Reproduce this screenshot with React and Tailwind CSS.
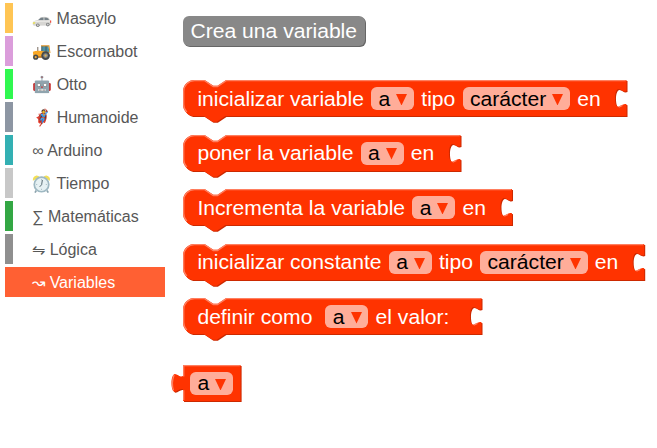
function CarIcon() {
  return (
    <svg viewBox="0 0 20 20" className="mr-[4.4px] mt-[6px] h-5 w-5">
      <path d="M0.8 12.8 1.4 10.6Q3.4 9.1 6 8.9L8.6 6.2Q13 5.1 16.4 6.6L18.2 9Q19.6 10.4 19 13.4L17.8 14.4 2 14.8Q0.4 14.4 0.8 12.8Z" fill="#d7d6d3" />
      <path d="M6.2 9.1 8.9 6.8 11.5 6.4V9.2ZM12.4 6.4Q15 6.4 16.2 7.4L17 9 12.5 9.2Z" fill="#758188" />
      <path d="M2 10.9Q8 9.7 18 10.1" fill="none" stroke="#f2f1ee" strokeWidth="1" />
      <path d="M0.8 11.6 3.3 11.2 3 12.5 0.9 12.8Z" fill="#ece13c" />
      <path d="M18 9.6h1.2v2.1H18Z" fill="#ef5044" />
      <circle cx="5.8" cy="14.2" r="1.8" fill="#77797a" />
      <circle cx="5.8" cy="14.2" r="1" fill="#d0d1d2" />
      <circle cx="15.8" cy="13.6" r="1.8" fill="#77797a" />
      <circle cx="15.8" cy="13.6" r="1" fill="#d0d1d2" />
    </svg>
  );
}

function TractorIcon() {
  return (
    <svg viewBox="0 0 20 20" className="mr-[4.4px] mt-[4px] h-5 w-5">
      <path d="M9.8 3h6.7l1 6.5H9.5Z" fill="#4d91a6" />
      <path d="M9 2.3h8.4v1.2H9Z" fill="#d98a1b" />
      <path d="M9.8 3.3V10M14 3.3V9" stroke="#40525a" strokeWidth="0.9" />
      <path d="M17 3.2 18 10" stroke="#e89b26" strokeWidth="1" />
      <path d="M5.8 4v5" stroke="#7b6d62" strokeWidth="1" />
      <path d="M0.9 8.8Q3 7.6 9.6 7.9L17 9V13.8H1.4Z" fill="#f9a825" />
      <path d="M2 13.2h11v1.6H2Z" fill="#b86e18" />
      <circle cx="3.7" cy="14.2" r="2.6" fill="#454a4d" />
      <circle cx="3.7" cy="14.2" r="1.1" fill="#e9a63c" />
      <circle cx="13.6" cy="12.6" r="4.3" fill="#454a4d" />
      <circle cx="13.6" cy="12.6" r="2.4" fill="#868b88" />
      <circle cx="13.6" cy="12.6" r="1.1" fill="#e3b052" />
    </svg>
  );
}

function ClockIcon() {
  return (
    <svg viewBox="0 0 18.7 18.7" className="mr-[4.4px] mt-[2px] h-5 w-5">
      <path d="M0.8 6.2Q0.5 2.2 4.1 1.4 6.3 1.3 7.1 3.1ZM16.8 6.2Q17.3 2.2 13.5 1.4 11.4 1.3 10.7 3.1Z" fill="#f2df58" />
      <path d="M4 15.5 2.8 17.4M14 15.5 15.2 17.4" stroke="#8ba3ad" strokeWidth="1.6" />
      <circle cx="8.9" cy="9.8" r="6.8" fill="#e6f1f3" stroke="#9eb8c2" strokeWidth="1.6" />
      <path d="M8.9 4.6V5.8M8.9 13.8v1.2M3.7 9.8h1.2M12.9 9.8h1.2" stroke="#9eb3bb" strokeWidth="0.7" />
      <path d="M9.7 5.6 9 10 7.2 12" fill="none" stroke="#51646c" strokeWidth="0.9" />
    </svg>
  );
}

const categories = [
  { Icon: CarIcon, label: "Masaylo", bar: "bg-[#ffc554]" },
  { Icon: TractorIcon, label: "Escornabot", bar: "bg-[#db9ddb]" },
  { icon: "🤖", label: "Otto", bar: "bg-[#30f850]" },
  { icon: "🦸", label: "Humanoide", bar: "bg-[#8d96a3]" },
  { icon: "∞", label: "Arduino", bar: "bg-[#33b0b3]" },
  { Icon: ClockIcon, label: "Tiempo", bar: "bg-[#c8c8c8]" },
  { icon: "∑", label: "Matemáticas", bar: "bg-[#33a744]" },
  { icon: "⇋", label: "Lógica", bar: "bg-[#8f8f8f]" },
  { icon: "↝", label: "Variables", bar: "bg-[#ff6033]", active: true },
];

function Dropdown({ children }) {
  return (
    <span className="mx-[7.2px] flex h-[23px] items-center rounded-[5.76px] bg-[#ffad99] pl-[7.4px] pr-[6.8px] text-black">
      {children}
      <svg className="ml-[6px] mt-[2px] h-[11.5px] w-[11px]" viewBox="0 0 11 11.5">
        <path d="M0 0H11L5.5 11.5Z" fill="#ff3300" />
      </svg>
    </span>
  );
}

// Statement block outline in workspace units, drawn at a 1.44 zoom.
function StatementShape({ width }) {
  const w = width / 1.44;
  const tab = "v7.6c-2.2,1.2 -3.6,-1.2 -5.6,-1.4c-1.6,0.4 -2.4,3 -2.4,6.3c0,3.4 0.8,5.6 2,6c2,0.2 3.8,-2.8 6,-1.6";
  const d = `M0,8A8,8 0 0,1 8,0H15l6,4 3,0 6,-4H${w}${tab}V25H29.5l-6,4 -3,0 -6,-4H8a8,8 0 0,1 -8,-8z`;
  return (
    <svg className="absolute left-0 top-0 overflow-visible" width={width} height="43">
      <g transform="scale(1.44)">
        <path d={d} fill="#cc2900" transform="translate(0.7,0.7)" />
        <path d={d} fill="#ff3300" />
        <path
          d={`M2.7,22.3A7.5,7.5 0 0,1 0.5,17V8A7.5,7.5 0 0,1 8,0.5H15l6,4 3,0 6,-4H${w - 0.5}M${w - 5.4},18.8l2.6,-1.2`}
          fill="none"
          stroke="#ff7f60"
          strokeWidth="0.9"
        />
      </g>
    </svg>
  );
}

function Block({ width, children }) {
  return (
    <div className="relative mb-[18.6px] h-9 whitespace-pre">
      <StatementShape width={width} />
      <div className="relative flex h-[37px] items-center pl-[14.4px]">{children}</div>
    </div>
  );
}

function ValueBlock() {
  const d =
    "M0,0H40V25H0V16.9c-2.2,-1.2 -4,1.8 -6,1.6c-1.2,-0.4 -2,-2.6 -2,-6c0,-3.3 0.8,-5.9 2.4,-6.3c2,0.2 3.4,2.6 5.6,1.4z";
  return (
    <div className="relative h-9">
      <svg className="absolute left-0 top-0 overflow-visible" width="58" height="37">
        <g transform="scale(1.44)">
          <path d={d} fill="#cc2900" transform="translate(0.7,0.7)" />
          <path d={d} fill="#ff3300" />
          <path
            d="M39.5,0.5H0.5V8M0.5,17.5V24.5M-6.6,17.6q-1.7,-5 0.4,-10.6"
            fill="none"
            stroke="#ff7f60"
            strokeWidth="0.9"
          />
        </g>
      </svg>
      <div className="relative flex h-[37px] items-center">
        <Dropdown>a</Dropdown>
      </div>
    </div>
  );
}

export default function App() {
  return (
    <div className="flex h-[448px] w-[657px] overflow-hidden bg-white font-['Liberation_Sans',Arial,sans-serif]">
      <nav className="flex w-[165px] shrink-0 flex-col gap-[3px] pl-[5px] pt-[3px] text-[16px] text-[#575757]">
        {categories.map(({ Icon, icon, label, bar, active }) => (
          <div
            key={label}
            className={active ? "flex h-[30px] shrink-0 bg-[#ff6033] text-white" : "flex h-[30px] shrink-0"}
          >
            <div className={`w-2 ${bar}`} />
            <span className="ml-[19.2px] flex items-center whitespace-pre leading-[31px]">
              {Icon && <Icon />}
              {Icon ? label : icon + " " + label}
            </span>
          </div>
        ))}
      </nav>
      <main className="ml-[18px] flex-1 pt-[16px] text-[21.12px] leading-6 text-white">
        <button className="flex h-[30px] w-[181.5px] items-center justify-center whitespace-pre rounded-[6px] bg-[#888888] shadow-[1px_1px_0_#666666]">
          Crea una variable
        </button>
        <div className="pt-[34px]">
          <Block width={443.5}>
            inicializar variable<Dropdown>a</Dropdown>tipo<Dropdown>carácter</Dropdown>en
          </Block>
          <Block width={277.5}>
            poner la variable<Dropdown>a</Dropdown>en
          </Block>
          <Block width={329}>
            Incrementa la variable<Dropdown>a</Dropdown>en
          </Block>
          <Block width={461.2}>
            inicializar constante<Dropdown>a</Dropdown>tipo<Dropdown>carácter</Dropdown>en
          </Block>
          <Block width={298.5}>
            {"definir como "}
            <Dropdown>a</Dropdown>el valor:
          </Block>
        </div>
        <div className="pt-[12px]">
          <ValueBlock />
        </div>
      </main>
    </div>
  );
}
